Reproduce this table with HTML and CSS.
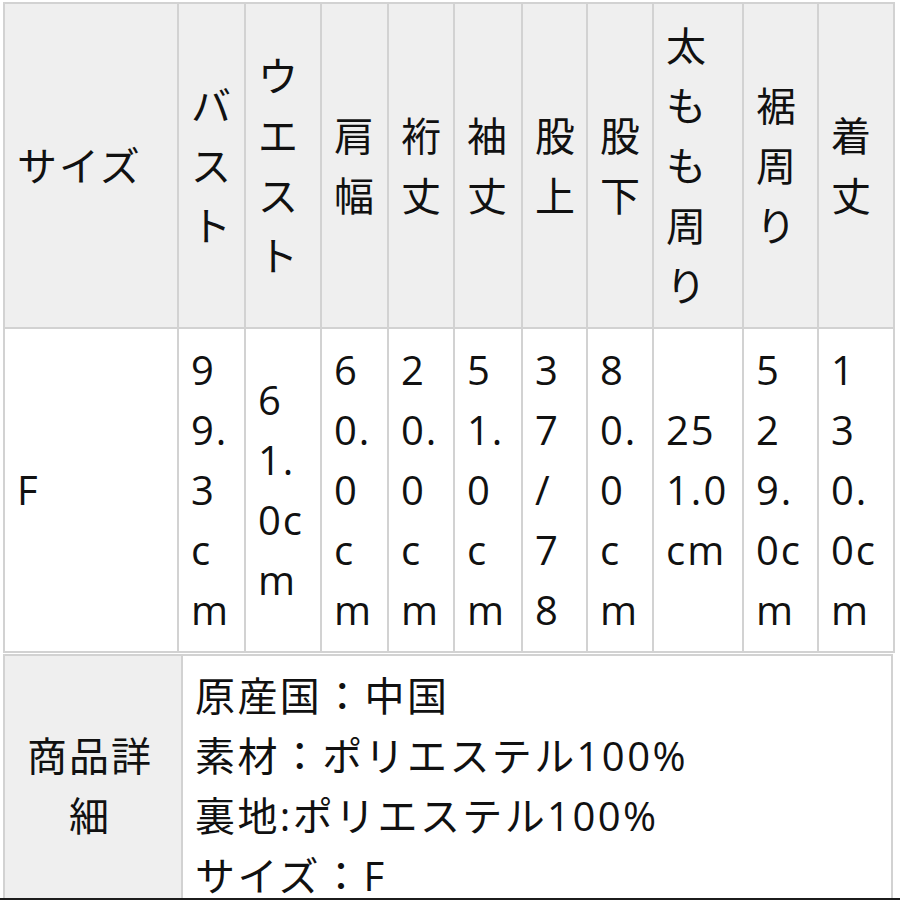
FILE: index.html
```html
<!DOCTYPE html>
<html lang="ja">
<head>
<meta charset="utf-8">
<title>サイズ表</title>
<link rel="stylesheet" href="styles.css">
</head>
<body>
<div class="sheet">
  <table class="size-table">
    <colgroup>
      <col class="c-label">
      <col class="c-67">
      <col class="c-76">
      <col class="c-67">
      <col class="c-66">
      <col class="c-68">
      <col class="c-65">
      <col class="c-66">
      <col class="c-90">
      <col class="c-75">
      <col class="c-76">
    </colgroup>
    <thead>
      <tr>
        <th class="first">サイズ</th>
        <th>バスト</th>
        <th>ウエスト</th>
        <th>肩幅</th>
        <th>裄丈</th>
        <th>袖丈</th>
        <th>股上</th>
        <th>股下</th>
        <th>太もも周り</th>
        <th>裾周り</th>
        <th>着丈</th>
      </tr>
    </thead>
    <tbody>
      <tr>
        <td class="first">F</td>
        <td>99.3cm</td>
        <td>61.0cm</td>
        <td>60.0cm</td>
        <td>20.0cm</td>
        <td>51.0cm</td>
        <td>37/78</td>
        <td>80.0cm</td>
        <td>251.0cm</td>
        <td>529.0cm</td>
        <td>130.0cm</td>
      </tr>
    </tbody>
  </table>

  <table class="detail-table">
    <colgroup>
      <col class="d-label">
      <col>
    </colgroup>
    <tbody>
      <tr>
        <th class="first">商品詳細</th>
        <td>原産国：中国<br>素材：ポリエステル100%<br>裏地:ポリエステル100%<br>サイズ：F</td>
      </tr>
    </tbody>
  </table>
</div>
<div class="screen-edge"></div>
</body>
</html>
```

FILE: styles.css
```css
* {
  box-sizing: border-box;
}

html, body {
  margin: 0;
  padding: 0;
  background: #ffffff;
}

body {
  font-family: "Open Sans", "Noto Sans CJK JP", sans-serif;
  font-size: 40px;
  line-height: 60px;
  letter-spacing: 2px;
  color: #111111;
}

.sheet {
  padding: 2px 0 0 3px;
  display: flex;
  flex-direction: column;
  align-items: flex-start;
}

table {
  border-collapse: separate;
  border-spacing: 0;
  table-layout: fixed;
}

th, td {
  font-weight: normal;
  text-align: left;
  vertical-align: middle;
  border-right: 2px solid #d2d2d2;
  border-bottom: 2px solid #d2d2d2;
  word-break: break-all;
}

th.first, td.first {
  border-left: 2px solid #d2d2d2;
}

.size-table {
  width: 892px;
}

.size-table thead th {
  border-top: 2px solid #d2d2d2;
  background: #efefef;
  padding: 12px 13px 11px 12px;
}

.size-table td {
  padding: 11px 13px 11px 12px;
  background: #ffffff;
  line-break: anywhere;
}

.c-label { width: 176px; }
.c-65 { width: 65px; }
.c-66 { width: 66px; }
.c-67 { width: 67px; }
.c-68 { width: 68px; }
.c-75 { width: 75px; }
.c-76 { width: 76px; }
.c-90 { width: 90px; }

.detail-table {
  width: 890px;
  margin-top: 1px;
}

.detail-table th,
.detail-table td {
  border-top: 2px solid #d2d2d2;
  padding: 10px 18px 10px 12px;
}

.detail-table th {
  background: #efefef;
  text-align: center;
}

.detail-table td {
  letter-spacing: 2.4px;
}

.d-label { width: 180px; }

.screen-edge {
  position: fixed;
  left: 0;
  right: 0;
  bottom: 0;
  height: 2px;
  background: #1c1c1c;
}
```
